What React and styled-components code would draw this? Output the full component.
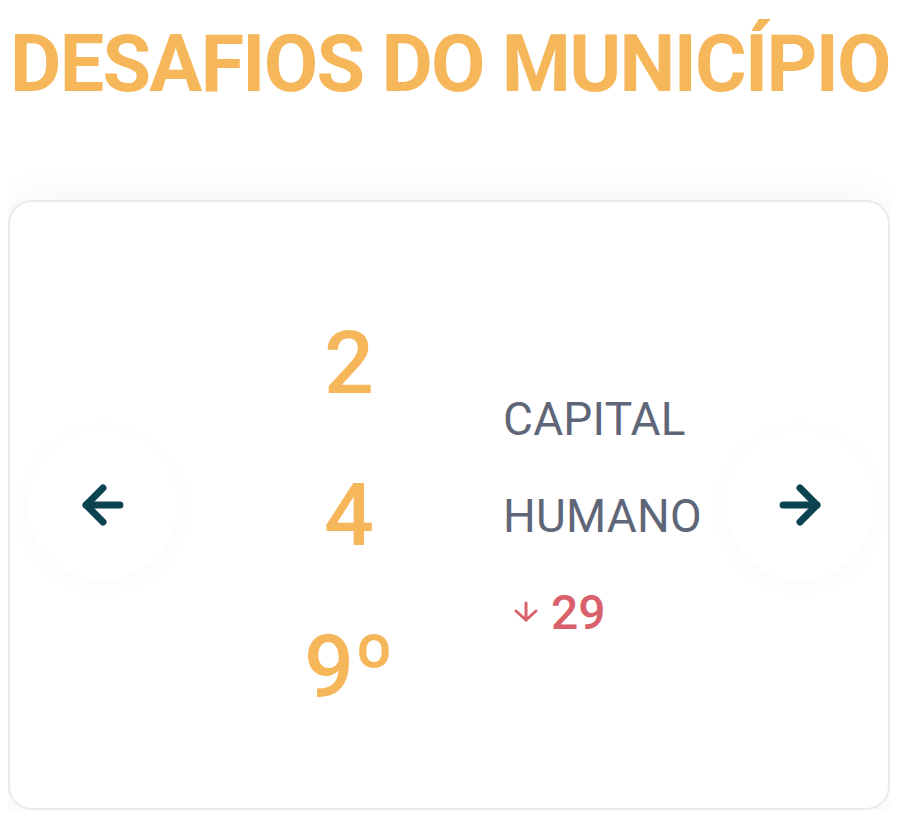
import React from "react";
import styled, { createGlobalStyle } from "styled-components";
import { ArrowLeft, ArrowRight } from "lucide-react";

const Global = createGlobalStyle`
  html, body { background: #ffffff; }
  body {
    margin: 8px;
    font-family: Roboto, "Noto Sans", "Liberation Sans", sans-serif;
  }
`;

const Page = styled.div`
  display: flex;
  flex-direction: column;
`;

const Title = styled.h1`
  margin: 10px 0 0 2px;
  font-size: 79px;
  line-height: 92px;
  font-weight: 700;
  color: #f6b65a;
  white-space: nowrap;
  letter-spacing: -1.7px;
`;

const Card = styled.section`
  margin-top: 90px;
  height: 606px;
  border: 2px solid #e8ebf0;
  border-radius: 24px;
  background: #ffffff;
  box-shadow: 0 0 44px rgba(20, 30, 50, 0.05);
  display: flex;
  align-items: center;
  padding: 0 13px 0 18px;
`;

const NavButton = styled.button`
  flex: none;
  width: 150px;
  height: 150px;
  border-radius: 50%;
  border: none;
  background: #ffffff;
  box-shadow: 0 4px 24px rgba(20, 30, 50, 0.028);
  display: flex;
  align-items: center;
  justify-content: center;
  color: #0b4351;
  padding: 0;
  cursor: pointer;
`;

const Middle = styled.div`
  flex: 1;
  display: flex;
  align-items: center;
  padding-left: 126px;
  margin-top: 20px;
`;

const RankColumn = styled.div`
  width: 90px;
  display: flex;
  flex-direction: column;
  align-items: center;
`;

const Digit = styled.span`
  font-size: 88px;
  line-height: 152px;
  font-weight: 500;
  color: #f6b65a;
`;

const InfoColumn = styled.div`
  margin-left: 109px;
  display: flex;
  flex-direction: column;
`;

const Label = styled.span`
  font-size: 46px;
  line-height: 97px;
  font-weight: 400;
  color: #5e6678;
  letter-spacing: 0.2px;
`;

const Change = styled.div`
  display: flex;
  align-items: center;
  gap: 11px;
  height: 95px;
  padding-left: 9px;
  color: #d9616b;
  font-size: 48px;
  font-weight: 500;
`;

const DownArrow = () => (
  <svg width="28" height="22" viewBox="0 0 28 22" fill="none" stroke="currentColor" strokeWidth="3" strokeLinecap="round" strokeLinejoin="round">
    <path d="M14 2v17" />
    <path d="M4 10l10 9 10-9" />
  </svg>
);

export default function App() {
  const rank = ["2", "4", "9º"];
  return (
    <Page>
      <Global />
      <Title>DESAFIOS DO MUNICÍPIO</Title>
      <Card>
        <NavButton aria-label="anterior">
          <ArrowLeft size={58} strokeWidth={2.9} />
        </NavButton>
        <Middle>
          <RankColumn>
            {rank.map((d) => (
              <Digit key={d}>{d}</Digit>
            ))}
          </RankColumn>
          <InfoColumn>
            <Label>CAPITAL</Label>
            <Label>HUMANO</Label>
            <Change>
              <DownArrow />
              <span>29</span>
            </Change>
          </InfoColumn>
        </Middle>
        <NavButton aria-label="próximo">
          <ArrowRight size={58} strokeWidth={2.9} />
        </NavButton>
      </Card>
    </Page>
  );
}
